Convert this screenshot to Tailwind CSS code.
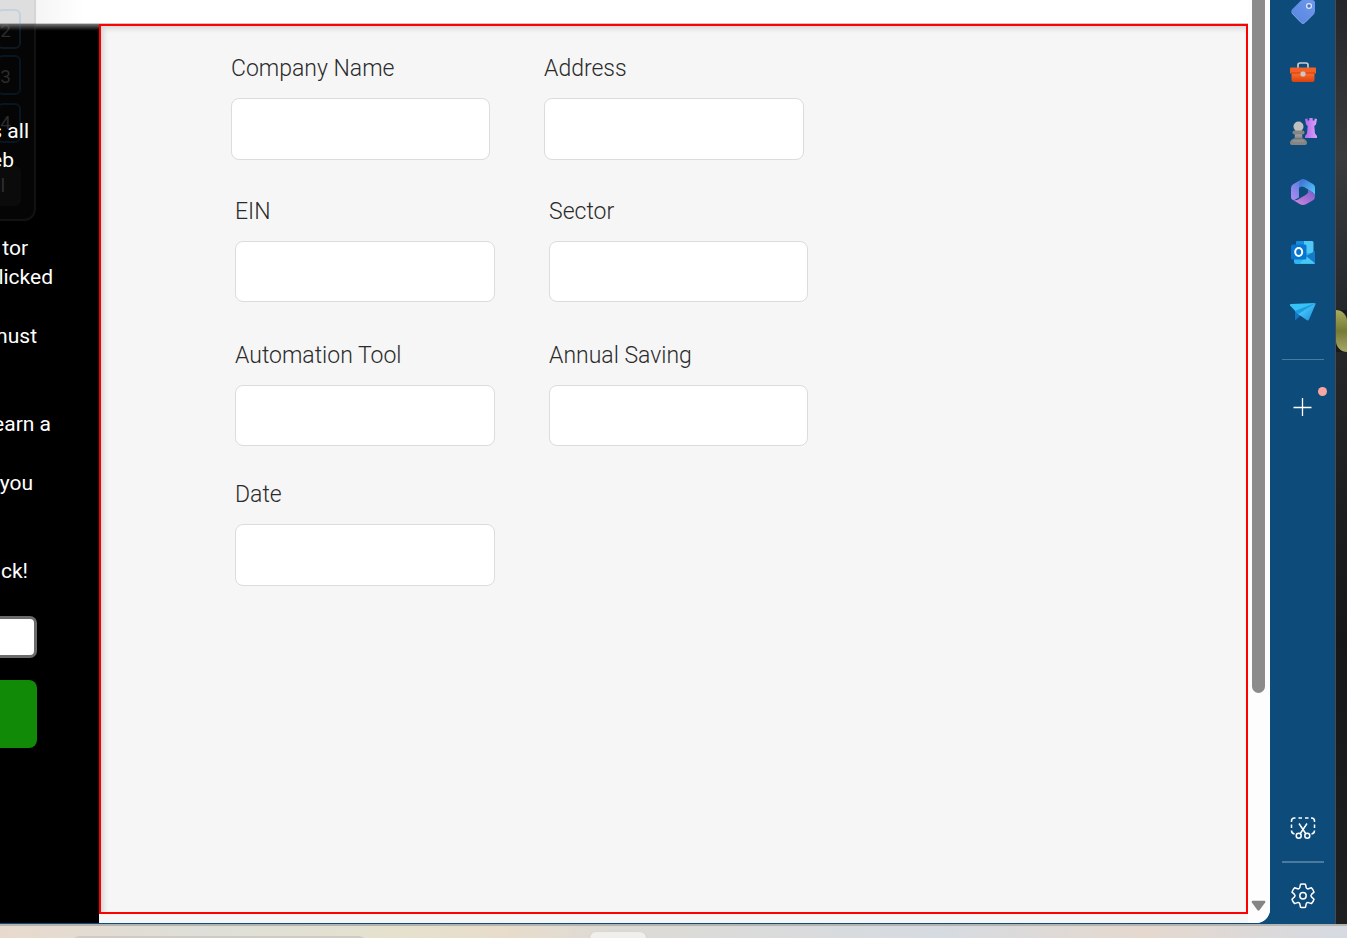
<!DOCTYPE html>
<html lang="en">
<head>
<meta charset="utf-8">
<title>Company form</title>
<script src="https://cdn.jsdelivr.net/npm/@tailwindcss/browser@4"></script>
</head>
<body class="h-screen overflow-hidden flex flex-col bg-[#0d4b7b] font-['Roboto','Liberation_Sans',sans-serif]">
<div class="flex flex-1 min-h-0">

  <!-- Page viewport -->
  <div class="relative flex flex-1 min-w-0 mb-px bg-white rounded-br-[14px] overflow-hidden">
    <div class="flex flex-col flex-1 min-w-0">
      <header class="h-6 shrink-0 bg-white border-b border-[#c8c8c8]"></header>
      <div class="flex flex-1 min-h-0">
        <aside class="relative w-[99px] shrink-0 bg-black text-white text-[21px] leading-[29px] whitespace-nowrap overflow-hidden pt-[93px]">
          <div class="absolute inset-x-0 top-0 h-2 bg-linear-to-b from-[#777] to-black"></div>
          <div class="relative z-20 flex flex-col">
            <p class="flex justify-end w-[29px]">s all</p>
            <p class="flex justify-end w-[14px] mb-[59px]">eb</p>
            <p class="flex justify-end w-7">tor</p>
            <p class="flex justify-end w-[53px] mb-[30px]">licked</p>
            <p class="flex justify-end w-[37px] mb-[59px]">must</p>
            <p class="flex justify-end w-[51px] mb-[30px]">earn a</p>
            <p class="flex justify-end w-[33px] mb-[59px]">you</p>
            <p class="flex justify-end w-7 mb-[30px]">ck!</p>
          </div>
          <input type="text" aria-label="Answer" class="block -ml-3 w-[49px] h-[42px] bg-white border-3 border-[#6b6b6b] rounded-[7px]">
          <button type="button" aria-label="Start" class="block -ml-3 mt-[22px] w-[49px] h-[68px] bg-[#108a07] rounded-lg"></button>
        </aside>

        <main class="flex flex-col flex-1 min-w-0 bg-[#f6f6f6]">
          <form class="flex-1 border-2 border-[#ff0000] shadow-[inset_3px_3px_5px_rgba(0,0,0,0.12)] pt-[29px] pl-[130px] text-[23px] leading-7 font-light text-[#2b2b2b]">
            <div class="flex gap-[54px] mb-[38px]">
              <div class="flex flex-col gap-[15px] w-[259px]"><label for="company">Company Name</label><input id="company" type="text" class="h-[62px] w-full bg-white border border-[#dcdcdc] rounded-lg px-3"></div>
              <div class="flex flex-col gap-[15px] w-[260px]"><label for="address">Address</label><input id="address" type="text" class="h-[62px] w-full bg-white border border-[#dcdcdc] rounded-lg px-3"></div>
            </div>
            <div class="flex gap-[54px] mb-10 pl-1">
              <div class="flex flex-col gap-[15px] w-[260px]"><label for="ein">EIN</label><input id="ein" type="text" class="h-[61px] w-full bg-white border border-[#dcdcdc] rounded-lg px-3"></div>
              <div class="flex flex-col gap-[15px] w-[259px]"><label for="sector">Sector</label><input id="sector" type="text" class="h-[61px] w-full bg-white border border-[#dcdcdc] rounded-lg px-3"></div>
            </div>
            <div class="flex gap-[54px] mb-[35px] pl-1">
              <div class="flex flex-col gap-[15px] w-[260px]"><label for="tool">Automation Tool</label><input id="tool" type="text" class="h-[61px] w-full bg-white border border-[#dcdcdc] rounded-lg px-3"></div>
              <div class="flex flex-col gap-[15px] w-[259px]"><label for="saving">Annual Saving</label><input id="saving" type="text" class="h-[61px] w-full bg-white border border-[#dcdcdc] rounded-lg px-3"></div>
            </div>
            <div class="flex pl-1">
              <div class="flex flex-col gap-[15px] w-[260px]"><label for="date">Date</label><input id="date" type="text" class="h-[62px] w-full bg-white border border-[#dcdcdc] rounded-lg px-3"></div>
            </div>
          </form>
          <div class="h-[9px] shrink-0"></div>
        </main>
      </div>
    </div>

    <!-- Scrollbar -->
    <div class="w-[22px] shrink-0 flex flex-col items-center justify-between bg-[#fdfdfd] pb-[11px] pr-px">
      <div class="w-[13px] h-[693px] bg-[#8b8b8b] rounded-b-full"></div>
      <svg class="w-[15px] h-3" viewBox="0 0 16 12"><path d="M1.5 .5h13q1.5.5.6 1.8L9 10.6q-1 1-2 0L.9 2.3Q0 1 1.5.5z" fill="#858585"/></svg>
    </div>

    <!-- Faint panel floating over the page -->
    <div class="absolute left-0 top-0 z-10 w-9 h-[221px] rounded-br-xl border-r-2 border-b-2 border-[#888]/10 bg-[#222]/15 text-[19px] leading-6 text-[#777]/35 pointer-events-none">
      <div class="absolute right-[13px] top-[9px] w-6 h-10 rounded-md border-2 border-[#2b8fd0]/15 flex items-center justify-end pr-2 pt-1">2</div>
      <div class="absolute right-[13px] top-[55px] w-6 h-10 rounded-md border-2 border-[#0b4068]/30 flex items-center justify-end pr-2 pt-1">3</div>
      <div class="absolute right-[13px] top-[103px] w-6 h-10 rounded-md border-2 border-[#0b4068]/30 flex items-center justify-end pr-2">4</div>
      <div class="absolute right-[13px] top-[166px] w-6 h-10 rounded-md bg-[#888]/5 flex items-center justify-end pr-4">l</div>
    </div>
    <div class="absolute left-9 top-0 w-12 h-[23px] bg-linear-to-r from-[#f5f5f5] to-white"></div>
  </div>

  <!-- Browser sidebar -->
  <nav class="w-[66px] shrink-0 flex flex-col items-center bg-[#0d4b7b] border-r border-[#4a4a4c]" aria-label="Sidebar">
    <button type="button" aria-label="Shopping" class="-mt-[18px] h-[60px] w-full shrink-0 flex items-center justify-center">
      <svg class="w-7 h-7" viewBox="0 0 28 28"><defs><linearGradient id="tg" x1="1" y1="0" x2="0" y2="1"><stop offset="0" stop-color="#6f98ee"/><stop offset="1" stop-color="#5486dc"/></linearGradient></defs><path d="M14 2h9q3 0 3 3v8q0 1.500-1 2.500l-9 9q-2 2-4 0l-9-9q-1.500-2 0-4l8.500-8.500Q12.500 2 14 2z" fill="url(#tg)"/><path d="M3 15l9 9.500q2 2 4 0l9-9" fill="none" stroke="#83a5ef"/><circle cx="20" cy="8" r="2.400" fill="#4b71bb" stroke="#dbe7ff" stroke-width="1.300"/></svg>
    </button>
    <button type="button" aria-label="Tools" class="h-[60px] w-full shrink-0 flex items-center justify-center">
      <svg class="w-7 h-7" viewBox="0 0 28 28"><defs><linearGradient id="tb" x1="0" y1="0" x2="0" y2="1"><stop offset="0" stop-color="#ff7135"/><stop offset="1" stop-color="#dc400a"/></linearGradient></defs><path d="M9 10V7q0-2 2-2h6q2 0 2 2v3" fill="none" stroke="#c9cdd3" stroke-width="1.700"/><path d="M2 9.500h24q1 0 1 1v5H1v-5q0-1 1-1z" fill="#f56027"/><path d="M2.500 14.500h23V22q0 2-2 2h-19q-2 0-2-2z" fill="url(#tb)"/><path d="M2 15h24" stroke="#bb3206" stroke-width=".8"/><rect x="11.500" y="13.500" width="5" height="5" rx="1.700" fill="#c9c9c9"/></svg>
    </button>
    <button type="button" aria-label="Games" class="h-[60px] w-full shrink-0 flex items-center justify-center">
      <svg class="w-7 h-7" viewBox="0 0 28 28"><defs><linearGradient id="rk" x1="0" y1="0" x2="1" y2="0"><stop offset="0" stop-color="#b06aea"/><stop offset="1" stop-color="#dda0fb"/></linearGradient><linearGradient id="pw" x1="0" y1="0" x2="0" y2="1"><stop offset="0" stop-color="#c9c9c9"/><stop offset="1" stop-color="#828282"/></linearGradient></defs><path d="M16 1l2.500-.5v2h1.800V0h3.400v2.500h1.800v-2L28 1l-1 5.500-1.700 1.500.7 7.500 2 2.500v2H16v-2l2-2.500.7-7.500L17 6.500z" fill="url(#rk)"/><path d="M6.500 11.500h6l1 9h-8z" fill="url(#pw)"/><circle cx="9.500" cy="8.500" r="5" fill="#c0c0c0"/><rect x="3.500" y="12.500" width="12" height="4" rx="2" fill="#858585"/><path d="M5 20.500h9q4 1 4 4.500 0 2-2 2H3q-2 0-2-2 0-3.500 4-4.500z" fill="#858583"/><path d="M4 23h11" stroke="#9b9b9b"/></svg>
    </button>
    <button type="button" aria-label="Microsoft 365" class="h-[60px] w-full shrink-0 flex items-center justify-center">
      <svg class="w-7 h-7" viewBox="0 0 28 28"><defs><linearGradient id="ma" x1="0" y1="1" x2="1" y2="0"><stop offset="0" stop-color="#b48af0"/><stop offset="1" stop-color="#427bdd"/></linearGradient><linearGradient id="mb" x1="0" y1="0" x2="1" y2="1"><stop offset="0" stop-color="#3c67d2"/><stop offset="1" stop-color="#57d2fb"/></linearGradient><linearGradient id="mc" x1="0" y1="1" x2="1" y2="0"><stop offset="0" stop-color="#d78ae0"/><stop offset="1" stop-color="#7358c8"/></linearGradient></defs><path d="M12.500 1.500L4.500 6Q2 7.500 2 10v8.500q0 4 3.500 3.500L10 19.500V9q0-2 1.500-3L16 2.500q-1.500-1.800-3.500-1z" fill="url(#ma)"/><path d="M12.500 1.500q2-.9 4.500.4l7 4.100q2 1.200 2 3.500v8q-1-2.500-3-3.500l-8-5q-3-1.500-5 1V7q0-3 2.500-5.500z" fill="url(#mb)"/><path d="M26 12v6.500q0 2.500-2 3.700l-7 4.100q-3 1.500-6 0L4 22q3 .8 5.500-.7L17 16.500q2-1 2-3.500v-1.500l4 2.500q3 1.500 3 4z" fill="url(#mc)"/><path d="M10 10.500q1.800-2.600 5-1l4 2.500v1q0 2.500-2 3.500l-3.500 2L10 16z" fill="#0d4b7b"/></svg>
    </button>
    <button type="button" aria-label="Outlook" class="h-[60px] w-full shrink-0 flex items-center justify-center">
      <svg class="w-7 h-7" viewBox="0 0 28 28"><path d="M7 4q0-1 1-1h8v12H7z" fill="#168de0"/><path d="M15 3h8q1.500 0 1.500 1.500V15H15z" fill="#50c8f5"/><path d="M5 15h21v10q0 1-1 1H7q-2 0-2-2z" fill="#2eb5ed"/><path d="M17 18l9-5v12.500z" fill="#1679c8"/><path d="M17 18l9 7.500H11z" fill="#48c9f4"/><rect x="2" y="6.500" width="15.500" height="15" rx="1.500" fill="#0875d1"/><ellipse cx="9.700" cy="14" rx="3.500" ry="3.900" fill="none" stroke="#fff" stroke-width="2"/></svg>
    </button>
    <button type="button" aria-label="Drop" class="h-[60px] w-full shrink-0 flex items-center justify-center">
      <svg class="w-7 h-7" viewBox="0 0 28 28"><defs><linearGradient id="dr" x1="0" y1="0" x2="1" y2="1"><stop offset="0" stop-color="#62ddff"/><stop offset="1" stop-color="#118ddd"/></linearGradient></defs><path d="M6 12v9q0 1.500 1.200.6L12 17z" fill="#1473c2"/><path d="M1 7.500Q.3 6.200 2 6.100L26 5 9 16z" fill="#35c2f4"/><path d="M26 5q1 .2.500 1.200L20 21.500q-.7 1.500-2 .8L9 16z" fill="url(#dr)"/><path d="M26 5L9 16l-3-3z" fill="#1b9be4"/></svg>
    </button>
    <hr class="mt-[17px] w-[42px] shrink-0 border-t border-[#4c7a9f]">
    <button type="button" aria-label="Customize" class="relative mt-[17px] h-[60px] w-full shrink-0 flex items-center justify-center">
      <svg class="w-5 h-5" viewBox="0 0 20 20"><path d="M9.500 1v18M.5 10.500h18" stroke="#fff" stroke-width="1.300"/></svg>
      <span class="absolute right-[8px] top-[10px] w-[9px] h-[9px] rounded-full bg-[#f9a5a0]"></span>
    </button>
    <div class="flex-1"></div>
    <button type="button" aria-label="Screenshot" class="h-[66px] w-full shrink-0 flex items-center justify-center">
      <svg class="w-7 h-7" viewBox="0 0 28 28" fill="none" stroke="#fff" stroke-width="1.500"><path d="M2.500 8V7q0-3 3-3h1M9.500 4H13M16 4h3.500M22 4h.5q3 0 3 3v1M25.500 10.500v3.500M25.500 16.500q0 3-3 3.500M2.500 10.500v3.500M2.500 16.500q0 3 3 3.500"/><path d="M10 9.500l7 10.500M18 9.500L11 20"/><circle cx="9.700" cy="21.800" r="2.500"/><circle cx="18.300" cy="21.800" r="2.500"/></svg>
    </button>
    <hr class="w-[42px] shrink-0 border-t-2 border-[#4c7a9f]">
    <button type="button" aria-label="Settings" class="h-[61px] w-full shrink-0 flex items-center justify-center pt-[5px]">
      <svg class="w-7 h-7" viewBox="0 0 28 28" fill="none" stroke="#fff" stroke-width="1.500" stroke-linejoin="round"><path d="M11.500 2.300q2.500-.7 5 0l.7 3.300q.5 1.600 2.200 1.200l3-1q1.900 1.900 2.600 4.300l-2.500 2.300q-1.200 1.300 0 2.500l2.500 2.300q-.7 2.500-2.600 4.400l-3-1q-1.700-.4-2.200 1.200l-.7 3.400q-2.500.6-5 0l-.7-3.400q-.5-1.600-2.200-1.200l-3 1q-1.900-1.900-2.600-4.400l2.500-2.300q1.200-1.200 0-2.500L3 10.100q.7-2.400 2.600-4.300l3 1q1.700.4 2.200-1.200z"/><circle cx="14" cy="13.700" r="3.200"/></svg>
    </button>
  </nav>

  <!-- Desktop wallpaper strip -->
  <div class="w-[11px] shrink-0 bg-[#18191a] flex flex-col">
    <div class="h-[310px] shrink-0 bg-linear-to-b from-[#242629] via-[#393b3d] to-[#25282a]"></div>
    <div class="h-[42px] shrink-0 bg-linear-to-b from-[#a8ad60] via-[#767a35] to-[#a7a86a] rounded-tr-full rounded-bl-full"></div>
    <div class="flex-1 bg-linear-to-b from-[#252628] via-[#151617] to-[#1d1f21]"></div>
  </div>
</div>

<!-- Taskbar edge -->
<footer class="relative h-[14px] shrink-0 border-t-2 border-[#b3b3b0] overflow-hidden flex">
  <div class="w-[30%] bg-linear-to-r from-[#e8d9cd] via-[#dddfd8] to-[#e5e1cd]"></div>
  <div class="w-[15%] bg-linear-to-r from-[#e5e1cd] via-[#e8dccb] to-[#dddbd5]"></div>
  <div class="w-[25%] bg-linear-to-r from-[#dddbd5] to-[#d6dbe1]"></div>
  <div class="flex-1 bg-linear-to-r from-[#d6dbe1] via-[#e5d8ce] to-[#d5dae2]"></div>
  <div class="absolute left-[70px] top-[10px] w-[298px] h-5 rounded-xl bg-[#cfcbc2]"></div>
  <div class="absolute left-[590px] top-[6px] w-14 h-5 rounded-md bg-[#f0efec] shadow-sm"></div>
</footer>
</body>
</html>
